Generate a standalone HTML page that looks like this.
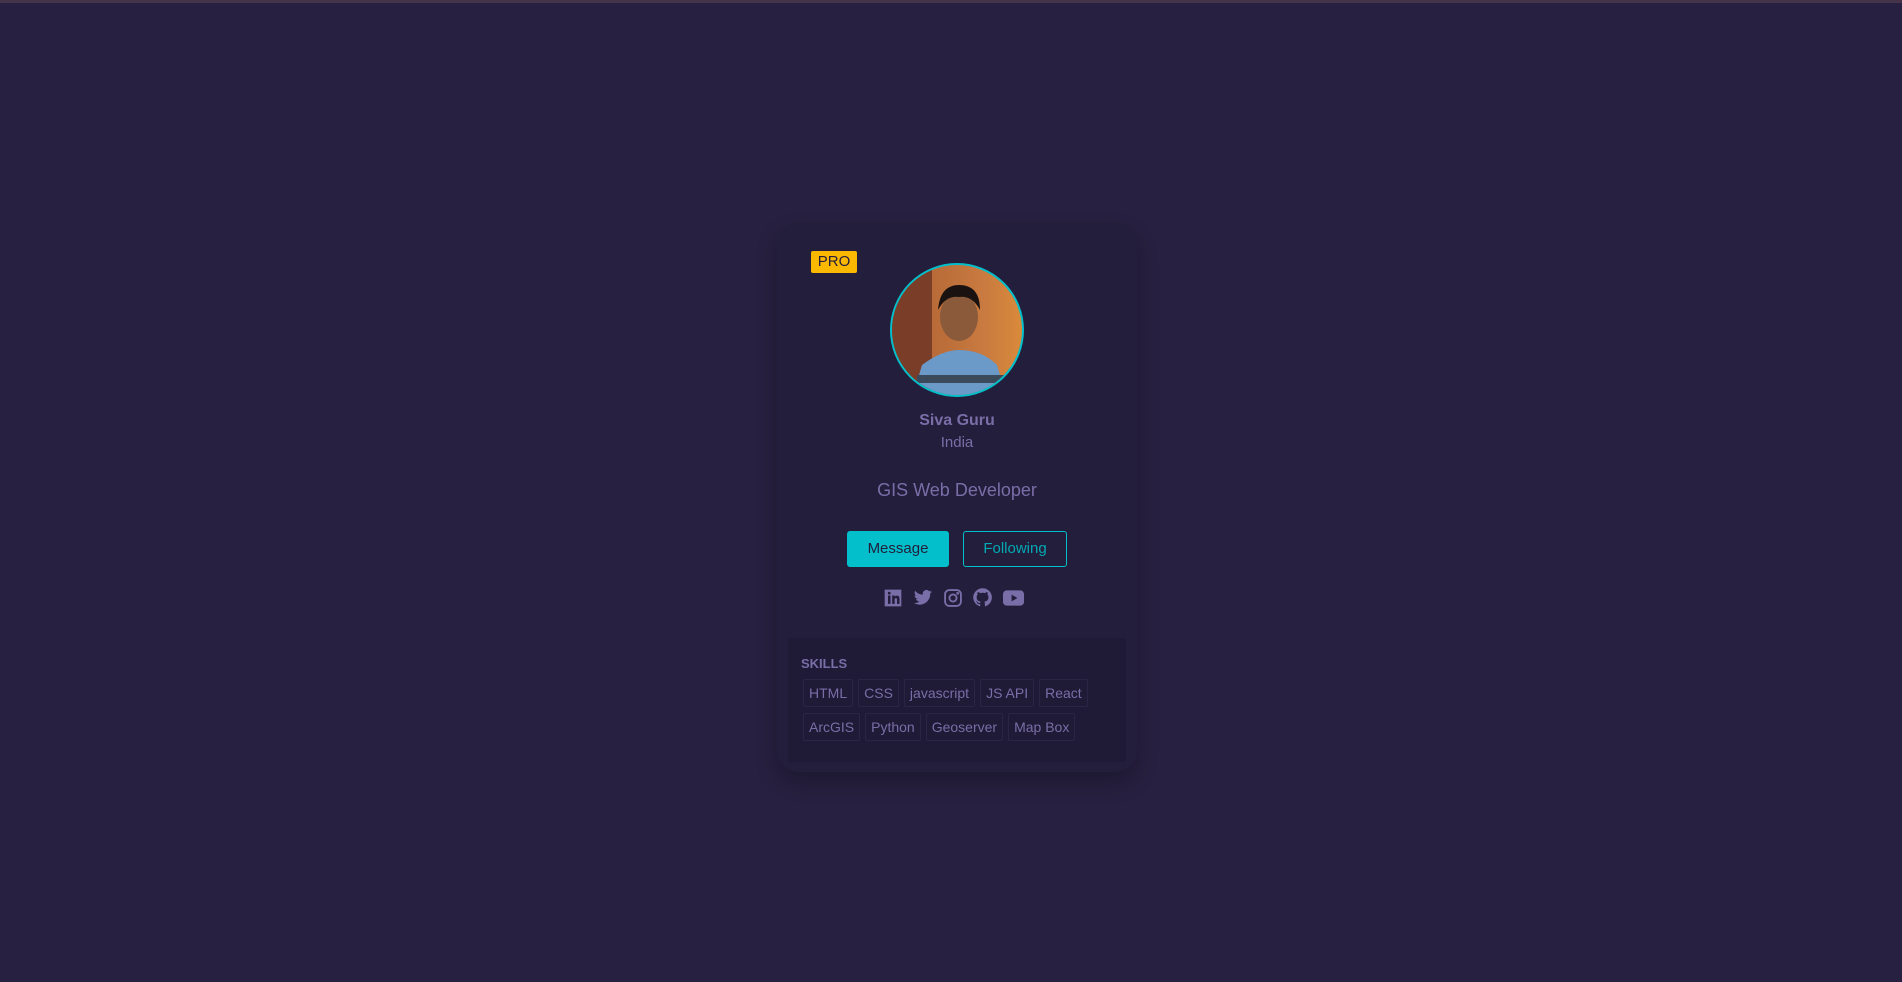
<!DOCTYPE html>
<html><head><meta charset="utf-8"><style>
*{box-sizing:border-box;margin:0;padding:0}
body{width:1902px;height:982px;background:#272040;font-family:"Liberation Sans",sans-serif;position:relative;overflow:hidden}
.topline{position:absolute;left:0;top:0;width:100%;height:3px;background:#45334a}
.card{position:absolute;left:777px;top:223px;width:360px;height:549px;background:#231e3b;border-radius:22px;box-shadow:0 10px 20px rgba(0,0,0,.25);color:#7a6ea8;text-align:center}
.pro{position:absolute;left:34px;top:28px;width:46px;height:22px;background:#fbb800;color:#231e3b;font-size:15px;line-height:22px;border-radius:2px}
.av{position:absolute;left:113px;top:40px;width:134px;height:134px;border-radius:50%;border:2px solid #03bfcb;overflow:hidden;background:linear-gradient(90deg,#8a4a2a 0%,#b86a38 30%,#c87a40 70%,#d98a3a 100%)}
.name{position:absolute;top:189px;width:100%;font-weight:bold;font-size:16px}
.loc{position:absolute;top:211px;width:100%;font-size:15px}
.job{position:absolute;top:257px;width:100%;font-size:18px}
.btn{position:absolute;top:308px;height:36px;line-height:34px;font-size:15px;border-radius:3px;border:1px solid #03bfcb}
.m{left:70px;width:102px;background:#03bfcb;color:#231e3b}
.f{left:186px;width:104px;color:#03a9b4}
.icons{position:absolute;top:364px;left:106px;display:flex;gap:9px;align-items:center}
.sk{position:absolute;left:11px;top:415px;width:338px;height:124px;background:#1f1a35;text-align:left;padding:18px 10px 0 13px}
.sk h6{font-size:13px;font-weight:bold;margin-bottom:8px}
.tags span{display:inline-block;border:1px solid #2b2545;border-radius:2px;padding:0 5px;height:28px;line-height:26px;font-size:14px;margin:0 3px 6px 2px}
</style></head><body>
<div class="topline"></div>
<div class="card">
<div class="pro">PRO</div>
<div class="av"><svg width="134" height="134" viewBox="0 0 134 134">
<rect x="0" y="0" width="40" height="134" fill="#7a3e28"/>
<path d="M20 134 L30 100 Q50 85 67 85 Q90 85 105 100 L115 134Z" fill="#6b9ac8"/>
<rect x="25" y="110" width="90" height="8" fill="#3b4a5a"/>
<ellipse cx="67" cy="52" rx="19" ry="24" fill="#8a5a3a"/>
<path d="M46 45 Q48 20 67 20 Q88 20 88 45 Q80 30 67 32 Q54 30 46 45Z" fill="#1a1210"/>
</svg></div>
<div class="name">Siva Guru</div>
<div class="loc">India</div>
<div class="job">GIS Web Developer</div>
<div class="btn m">Message</div>
<div class="btn f">Following</div>
<div class="icons">
<svg width="20" height="20" viewBox="0 0 24 24"><path fill="#7a6ea8" d="M2 2h20v20H2z M6 9v10h3V9z M7.5 4.5a1.7 1.7 0 1 0 0 3.4a1.7 1.7 0 0 0 0-3.4z M11 9v10h3v-5.5c0-1.5 2.8-2 2.8 0V19h3v-6.5c0-4-4.5-4-5.8-2V9z" fill-rule="evenodd"/></svg>
<svg width="22" height="20" viewBox="0 0 24 24"><path fill="#7a6ea8" d="M23 4.6a9 9 0 0 1-2.6.7A4.5 4.5 0 0 0 22.4 2.8a9 9 0 0 1-2.9 1.1A4.5 4.5 0 0 0 11.8 8 12.8 12.8 0 0 1 2.5 3.3a4.5 4.5 0 0 0 1.4 6 4.5 4.5 0 0 1-2-.6A4.5 4.5 0 0 0 5.5 13a4.5 4.5 0 0 1-2 .1 4.5 4.5 0 0 0 4.2 3.1A9 9 0 0 1 1 18a12.8 12.8 0 0 0 19.7-11.4A9 9 0 0 0 23 4.6z"/></svg>
<svg width="20" height="20" viewBox="0 0 24 24" fill="none" stroke="#7a6ea8" stroke-width="2.2"><rect x="2.5" y="2.5" width="19" height="19" rx="5"/><circle cx="12" cy="12" r="4.3"/><circle cx="17.6" cy="6.4" r=".6" fill="#7a6ea8"/></svg>
<svg width="21" height="21" viewBox="0 0 24 24"><path fill="#7a6ea8" d="M12 1.5A10.5 10.5 0 0 0 8.7 22c.5.1.7-.2.7-.5v-2c-2.9.6-3.5-1.3-3.5-1.3-.5-1.2-1.2-1.5-1.2-1.5-1-.6 0-.6 0-.6 1 .1 1.6 1.1 1.6 1.1.9 1.6 2.5 1.1 3.1.9.1-.7.4-1.1.7-1.4-2.3-.3-4.8-1.2-4.8-5.2 0-1.1.4-2.1 1.1-2.8-.1-.3-.5-1.3.1-2.8 0 0 .9-.3 2.9 1.1a10 10 0 0 1 5.3 0c2-1.4 2.9-1.1 2.9-1.1.6 1.5.2 2.5.1 2.8.7.7 1.1 1.7 1.1 2.8 0 4-2.5 4.9-4.8 5.2.4.3.7 1 .7 1.9v2.9c0 .3.2.6.7.5A10.5 10.5 0 0 0 12 1.5z"/></svg>
<svg width="23" height="20" viewBox="0 0 24 20"><rect x="1" y="2" width="22" height="16" rx="4" fill="#7a6ea8"/><path d="M10 6.5v7l6-3.5z" fill="#231e3b"/></svg>
</div>
<div class="sk"><h6>SKILLS</h6>
<div class="tags"><span>HTML</span><span>CSS</span><span>javascript</span><span>JS API</span><span>React</span><br><span>ArcGIS</span><span>Python</span><span>Geoserver</span><span>Map Box</span></div>
</div>
</div>
</body></html>
